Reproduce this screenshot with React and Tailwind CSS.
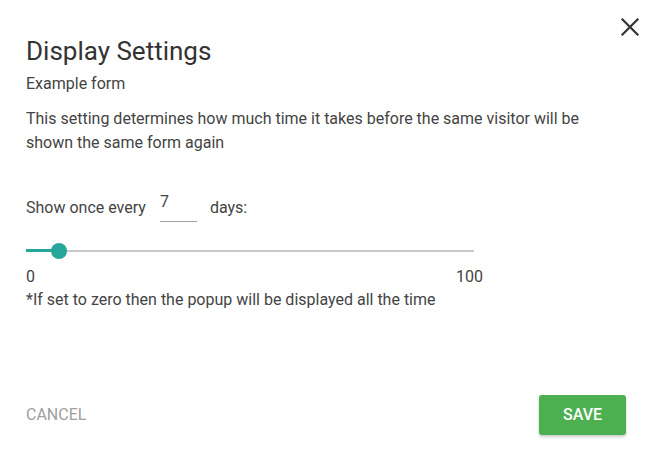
import React from "react";

export default function App() {
  const value = 7;
  const trackW = 448;
  return (
    <div className="relative w-[655px] h-[453px] bg-white text-[#444]" style={{ fontFamily: "Roboto, 'Liberation Sans', sans-serif" }}>
      <button className="absolute right-[15px] top-[17px] w-[20px] h-[20px] flex items-center justify-center text-[#333]">
        <svg width="20" height="20" viewBox="0 0 20 20" fill="none" stroke="currentColor" strokeWidth="2.2" strokeLinecap="square">
          <path d="M2.5 2.5 L17.5 17.5 M17.5 2.5 L2.5 17.5" />
        </svg>
      </button>
      <div className="flex flex-col h-full px-[26px] pt-[34px] pb-[18px]">
        <h1 className="text-[26px] leading-[34px] text-[#333] font-normal">Display Settings</h1>
        <div className="text-[16px] leading-[20px] mt-[6px]">Example form</div>
        <p className="text-[16px] leading-[24px] mt-[13px] w-[580px]">
          This setting determines how much time it takes before the same visitor will be shown the same form again
        </p>
        <div className="flex items-end text-[16px] mt-[39px] h-[28px]">
          <span className="pb-[2px]">Show once every</span>
          <div className="ml-[14px] w-[37px] border-b border-[#9e9e9e] h-[28px] flex items-start">
            <span className="leading-[20px] mt-[-2px]">{value}</span>
          </div>
          <span className="ml-[13px] pb-[2px]">days:</span>
        </div>
        <div className="relative w-[448px] h-[15px] mt-[21px] flex items-center">
          <div className="w-full h-[2px] bg-[#c8c8c8]" />
          <div className="absolute left-0 top-[6px] h-[3px] bg-[#26a69a]" style={{ width: `${(value / 100) * trackW}px` }} />
          <div className="absolute top-0 w-[16px] h-[16px] rounded-full bg-[#26a69a]" style={{ left: `${(value / 100) * trackW + 2 - 8}px` }} />
        </div>
        <div className="flex justify-between w-[457px] text-[16px] leading-[20px] mt-[9px]">
          <span>0</span>
          <span>100</span>
        </div>
        <div className="text-[16px] leading-[20px] mt-[3px]">*If set to zero then the popup will be displayed all the time</div>
        <div className="flex-1" />
        <div className="flex items-center justify-between">
          <button className="text-[16px] text-[#a0a0a0] uppercase">Cancel</button>
          <button className="w-[87px] h-[40px] mr-[3px] rounded-[3px] bg-[#4caf50] text-white text-[16px] font-medium uppercase shadow-[0_2px_3px_rgba(0,0,0,0.2)]">Save</button>
        </div>
      </div>
    </div>
  );
}
